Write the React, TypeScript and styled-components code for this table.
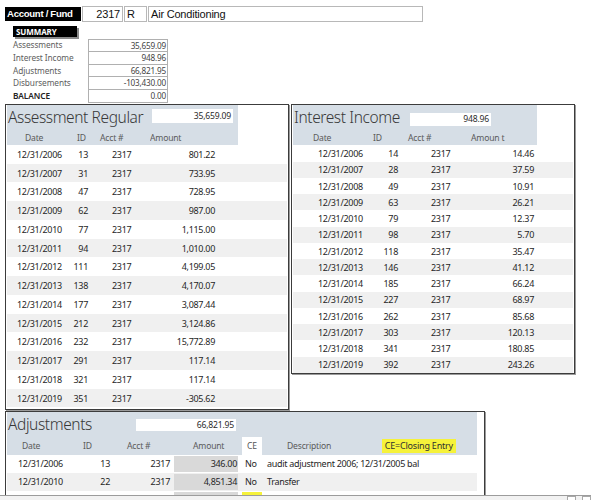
import React from "react";
import styled, { createGlobalStyle } from "styled-components";

const FONT = `"Noto Sans", "Liberation Sans", sans-serif`;
const ARIAL = `"Liberation Sans", Arial, sans-serif`;

const GlobalStyle = createGlobalStyle`
  html, body { margin: 0; padding: 0; background: #fff; }
  body { font-family: ${FONT}; color: #333; }
  * { box-sizing: border-box; }
`;

const Page = styled.div`
  width: 591px;
  height: 500px;
  overflow: hidden;
  display: flex;
  flex-direction: column;
`;

const Viewport = styled.div`
  flex: 1;
  min-height: 0;
  overflow: hidden;
  padding: 6px 0 0 5px;
`;

const TopBar = styled.div`
  display: flex;
  align-items: center;
  height: 16px;
  gap: 1px;
`;

const AcctLabel = styled.div`
  width: 76px;
  height: 14px;
  background: #000;
  color: #fff;
  font-family: ${ARIAL};
  font-weight: 700;
  font-size: 9.6px;
  letter-spacing: -0.3px;
  line-height: 14px;
  padding-left: 2px;
  white-space: nowrap;
`;

const Field = styled.div<{ $w: number; $align?: string }>`
  width: ${(p) => p.$w}px;
  height: 16px;
  border: 1px solid #b8b8b8;
  font-family: ${ARIAL};
  font-size: 11px;
  letter-spacing: -0.2px;
  line-height: 14px;
  padding: 0 2px;
  color: #111;
  text-align: ${(p) => p.$align || "left"};
  white-space: nowrap;
`;

const Summary = styled.div`
  margin: 4px 0 0 8px;
`;

const SummaryTag = styled.div`
  width: 64px;
  height: 11px;
  background: #000;
  color: #fff;
  font-weight: 700;
  font-size: 8px;
  letter-spacing: -0.1px;
  line-height: 11px;
  padding-left: 3px;
  box-shadow: 2px 2px 0 #8a8a8a;
`;

const SummaryGrid = styled.div`
  display: grid;
  grid-template-columns: 75px 80px;
  grid-auto-rows: 12.8px;
  margin-top: 2px;
`;

const SumLabel = styled.div<{ $strong?: boolean }>`
  font-size: 8.3px;
  letter-spacing: -0.1px;
  line-height: 12.8px;
  color: ${(p) => (p.$strong ? "#222" : "#5e5e5e")};
  font-weight: ${(p) => (p.$strong ? 600 : 400)};
`;

const SumValue = styled.div<{ $first?: boolean }>`
  border: 1px solid #b0b0b0;
  border-top-width: ${(p) => (p.$first ? 1 : 0)}px;
  font-size: 8.2px;
  letter-spacing: -0.2px;
  line-height: 11.8px;
  text-align: right;
  padding-right: 1px;
  color: #444;
`;

const PanelsRow = styled.div`
  display: flex;
  align-items: flex-start;
  gap: 2px;
  margin-top: 1px;
`;

const Panel = styled.section<{ $w: number; $h: number }>`
  width: ${(p) => p.$w}px;
  height: ${(p) => p.$h}px;
  border: 1px solid #3c3c3c;
  box-shadow: 1px 1px 0 #9a9a9a;
  padding: 0 1px;
  overflow: hidden;
  background: #fff;
`;

const Header = styled.div<{ $w: number; $h: number }>`
  width: ${(p) => p.$w}px;
  height: ${(p) => p.$h}px;
  background: #d6dee6;
  display: flex;
  flex-direction: column;
`;

const TitleRow = styled.div<{ $h: number }>`
  display: flex;
  align-items: flex-start;
  height: ${(p) => p.$h}px;
  flex: none;
`;

const Title = styled.div<{ $w: number }>`
  width: ${(p) => p.$w}px;
  font-size: 15.5px;
  letter-spacing: -0.4px;
  font-weight: 300;
  color: #383838;
  line-height: 24px;
  padding-left: 1px;
  white-space: nowrap;
`;

const TotalBox = styled.div<{ $top: number; $h: number; $w: number }>`
  width: ${(p) => p.$w}px;
  height: ${(p) => p.$h}px;
  margin-top: ${(p) => p.$top}px;
  background: #fff;
  font-size: 8.6px;
  letter-spacing: -0.2px;
  line-height: ${(p) => p.$h}px;
  text-align: right;
  padding-right: 2px;
  color: #2a2a2a;
`;

const RowGrid = styled.div<{ $cols: string; $h: number; $alt?: boolean; $w?: number }>`
  display: grid;
  grid-template-columns: ${(p) => p.$cols};
  width: ${(p) => (p.$w ? `${p.$w}px` : "auto")};
  height: ${(p) => p.$h}px;
  align-items: center;
  background: ${(p) => (p.$alt ? "#f0f0f0" : "transparent")};
  flex: none;
`;

const Cell = styled.div<{ $align?: string; $pl?: number; $pr?: number }>`
  text-align: ${(p) => p.$align || "left"};
  padding-left: ${(p) => p.$pl || 0}px;
  padding-right: ${(p) => p.$pr || 0}px;
  font-size: 9px;
  letter-spacing: -0.3px;
  color: #262626;
  white-space: nowrap;
  overflow: hidden;
`;

const HeadCell = styled(Cell)`
  font-size: 8.6px;
  letter-spacing: -0.2px;
  color: #5a5a5a;
`;

const FillCell = styled(Cell)<{ $bg: string; $ml?: number; $mr?: number }>`
  align-self: stretch;
  display: flex;
  align-items: center;
  justify-content: ${(p) => (p.$align === "right" ? "flex-end" : "flex-start")};
  background: ${(p) => p.$bg};
  margin: 1px ${(p) => p.$mr || 0}px 1px ${(p) => p.$ml || 0}px;
`;

const CEHead = styled.div`
  align-self: stretch;
  margin-left: 2px;
  width: 20px;
  background: #fff;
  font-size: 8.6px;
  color: #555;
  display: flex;
  align-items: center;
  justify-content: center;
`;

const DescHead = styled(HeadCell)`
  display: flex;
  align-items: center;
  justify-content: space-between;
`;

const Highlight = styled.span`
  background: #f6f23a;
  color: #2f2f2f;
  font-size: 9px;
  letter-spacing: -0.2px;
  line-height: 14px;
  padding: 0 3px;
`;

const Scrollbar = styled.div`
  height: 5px;
  flex: none;
  display: flex;
  border-top: 1px solid #9c9c9c;
  background: #f2f2f2;
`;

const Track = styled.div`
  flex: 1;
`;

const ScrollBtn = styled.div<{ $ml: number }>`
  width: 9px;
  margin-left: ${(p) => p.$ml}px;
  border: 1px solid #a8a8a8;
  border-bottom: none;
  background: #fff;
`;

type Col = { w: number; align?: string; pl?: number; pr?: number };
type HCol = { pl?: number; label: string };

function DataTable({ cols, rows, rowH }: { cols: Col[]; rows: string[][]; rowH: number }) {
  const tpl = cols.map((c) => `${c.w}px`).join(" ");
  return (
    <>
      {rows.map((r, i) => (
        <RowGrid key={i} $cols={tpl} $h={rowH} $alt={i % 2 === 1}>
          {r.map((v, j) => (
            <Cell key={j} $align={cols[j].align} $pl={cols[j].pl} $pr={cols[j].pr}>
              {v}
            </Cell>
          ))}
        </RowGrid>
      ))}
    </>
  );
}

function HeadRow({ cols, heads, h }: { cols: Col[]; heads: HCol[]; h: number }) {
  const tpl = cols.map((c) => `${c.w}px`).join(" ");
  return (
    <RowGrid $cols={tpl} $h={h}>
      {heads.map((hd, j) => (
        <HeadCell key={j} $pl={hd.pl}>
          {hd.label}
        </HeadCell>
      ))}
    </RowGrid>
  );
}

const assessCols: Col[] = [
  { w: 63, pl: 10 },
  { w: 20, align: "right", pr: 2 },
  { w: 60, pl: 22 },
  { w: 88, align: "right", pr: 23 },
];
const assessHeads: HCol[] = [
  { label: "Date", pl: 18 },
  { label: "ID", pl: 7 },
  { label: "Acct #", pl: 10 },
  { label: "Amount", pl: 0 },
];
const assessRows = [
  ["12/31/2006", "13", "2317", "801.22"],
  ["12/31/2007", "31", "2317", "733.95"],
  ["12/31/2008", "47", "2317", "728.95"],
  ["12/31/2009", "62", "2317", "987.00"],
  ["12/31/2010", "77", "2317", "1,115.00"],
  ["12/31/2011", "94", "2317", "1,010.00"],
  ["12/31/2012", "111", "2317", "4,199.05"],
  ["12/31/2013", "138", "2317", "4,170.07"],
  ["12/31/2014", "177", "2317", "3,087.44"],
  ["12/31/2015", "212", "2317", "3,124.86"],
  ["12/31/2016", "232", "2317", "15,772.89"],
  ["12/31/2017", "291", "2317", "117.14"],
  ["12/31/2018", "321", "2317", "117.14"],
  ["12/31/2019", "351", "2317", "-305.62"],
];

const intCols: Col[] = [
  { w: 77, pl: 25 },
  { w: 35, align: "right", pr: 7 },
  { w: 55, pl: 26 },
  { w: 77, align: "right", pr: 3 },
];
const intHeads: HCol[] = [
  { label: "Date", pl: 20 },
  { label: "ID", pl: 3 },
  { label: "Acct #", pl: 3 },
  { label: "Amoun t", pl: 11 },
];
const intRows = [
  ["12/31/2006", "14", "2317", "14.46"],
  ["12/31/2007", "28", "2317", "37.59"],
  ["12/31/2008", "49", "2317", "10.91"],
  ["12/31/2009", "63", "2317", "26.21"],
  ["12/31/2010", "79", "2317", "12.37"],
  ["12/31/2011", "98", "2317", "5.70"],
  ["12/31/2012", "118", "2317", "35.47"],
  ["12/31/2013", "146", "2317", "41.12"],
  ["12/31/2014", "185", "2317", "66.24"],
  ["12/31/2015", "227", "2317", "68.97"],
  ["12/31/2016", "262", "2317", "85.68"],
  ["12/31/2017", "303", "2317", "120.13"],
  ["12/31/2018", "341", "2317", "180.85"],
  ["12/31/2019", "392", "2317", "243.26"],
];

const adjTpl = "68px 40px 57px 68px 24px 213px";
const adjRows = [
  { date: "12/31/2006", id: "13", acct: "2317", amt: "346.00", ce: "No", desc: "audit adjustment 2006; 12/31/2005 bal", yellow: false },
  { date: "12/31/2010", id: "22", acct: "2317", amt: "4,851.34", ce: "No", desc: "Transfer", yellow: false },
  { date: "12/31/2011", id: "37", acct: "2317", amt: "", ce: "", desc: "closing entry adjustment", yellow: true },
];

const summary = [
  ["Assessments", "35,659.09"],
  ["Interest Income", "948.96"],
  ["Adjustments", "66,821.95"],
  ["Disbursements", "-103,430.00"],
  ["BALANCE", "0.00"],
];

export default function App() {
  return (
    <Page>
      <GlobalStyle />
      <Viewport>
        <TopBar>
          <AcctLabel>Account / Fund</AcctLabel>
          <Field $w={41} $align="right">2317</Field>
          <Field $w={23}>R</Field>
          <Field $w={275}>Air Conditioning</Field>
        </TopBar>

        <Summary>
          <SummaryTag>SUMMARY</SummaryTag>
          <SummaryGrid>
            {summary.map(([l, v], i) => (
              <React.Fragment key={l}>
                <SumLabel $strong={l === "BALANCE"}>{l}</SumLabel>
                <SumValue $first={i === 0}>{v}</SumValue>
              </React.Fragment>
            ))}
          </SummaryGrid>
        </Summary>

        <PanelsRow>
          <Panel $w={284} $h={306}>
            <Header $w={231} $h={40}>
              <TitleRow $h={26}>
                <Title $w={145}>Assessment Regular</Title>
                <TotalBox $top={4} $h={14} $w={81}>35,659.09</TotalBox>
              </TitleRow>
              <HeadRow cols={assessCols} heads={assessHeads} h={14} />
            </Header>
            <DataTable cols={assessCols} rows={assessRows} rowH={18.75} />
          </Panel>

          <Panel $w={284} $h={270}>
            <Header $w={244} $h={40.5}>
              <TitleRow $h={26}>
                <Title $w={117}>Interest Income</Title>
                <TotalBox $top={8} $h={13} $w={81}>948.96</TotalBox>
              </TitleRow>
              <HeadRow cols={intCols} heads={intHeads} h={14.5} />
            </Header>
            <DataTable cols={intCols} rows={intRows} rowH={16.25} />
          </Panel>
        </PanelsRow>

        <PanelsRow>
          <Panel $w={480} $h={120}>
            <Header $w={470} $h={43}>
              <TitleRow $h={25}>
                <Title $w={129}>Adjustments</Title>
                <TotalBox $top={7} $h={12} $w={100}>66,821.95</TotalBox>
              </TitleRow>
              <RowGrid $cols={adjTpl} $h={18}>
                <HeadCell $pl={15}>Date</HeadCell>
                <HeadCell $pl={8}>ID</HeadCell>
                <HeadCell $pl={12}>Acct #</HeadCell>
                <HeadCell $pl={21}>Amount</HeadCell>
                <CEHead>CE</CEHead>
                <DescHead $pl={23} $pr={21}>
                  <span>Description</span>
                  <Highlight>CE=Closing Entry</Highlight>
                </DescHead>
              </RowGrid>
            </Header>
            {adjRows.map((r, i) => (
              <RowGrid key={i} $cols={adjTpl} $h={18} $alt={i === 1} $w={470}>
                <Cell $pl={11}>{r.date}</Cell>
                <Cell $align="right" $pr={5}>{r.id}</Cell>
                <Cell $align="right" $pr={2}>{r.acct}</Cell>
                <FillCell $bg="#d9d9d9" $align="right" $pr={1} $ml={2} $mr={2}>{r.amt}</FillCell>
                <FillCell $bg={r.yellow ? "#f6f23a" : "transparent"} $pl={3} $ml={2} $mr={2}>{r.ce}</FillCell>
                <Cell $pl={3}>{r.desc}</Cell>
              </RowGrid>
            ))}
          </Panel>
        </PanelsRow>
      </Viewport>
      <Scrollbar>
        <Track />
        <ScrollBtn $ml={0} />
        <ScrollBtn $ml={6} />
      </Scrollbar>
    </Page>
  );
}
